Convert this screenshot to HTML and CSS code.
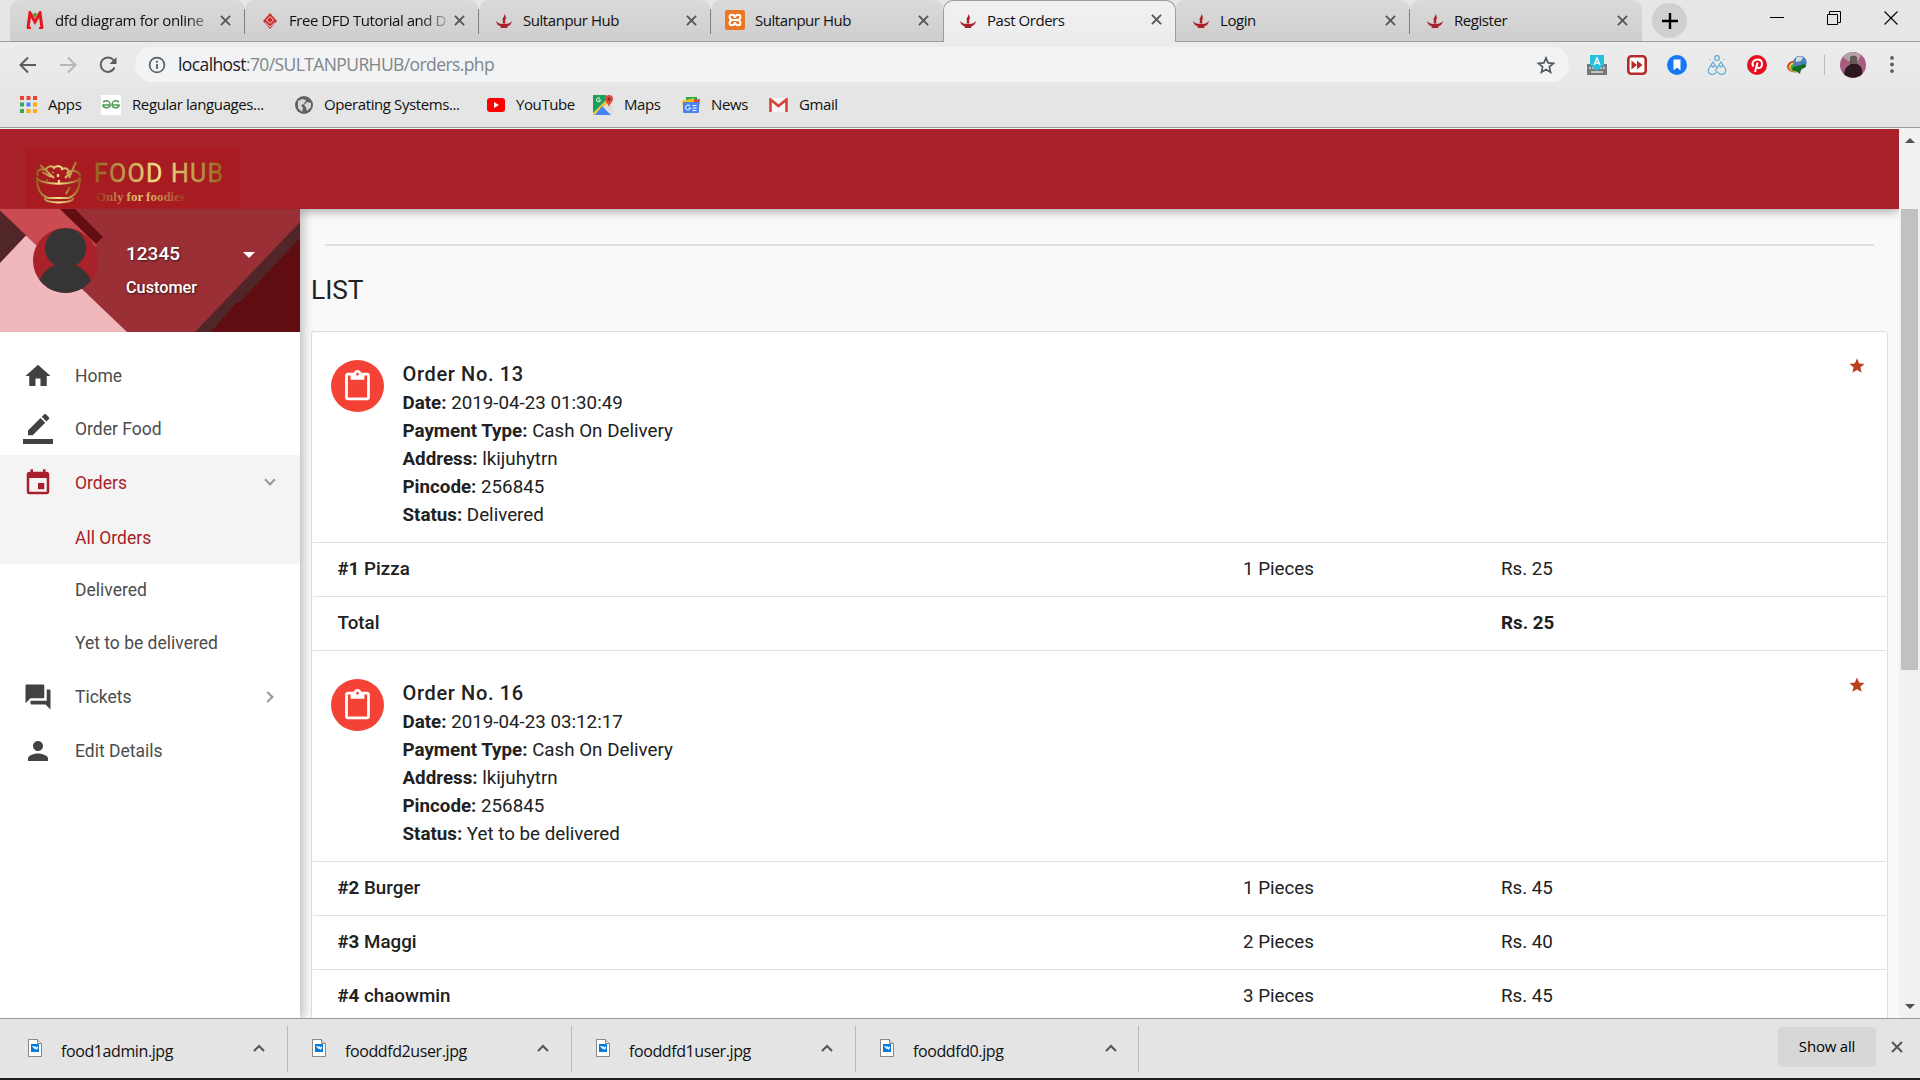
FILE: index.html
```html
<!DOCTYPE html>
<html lang="en">
<head>
<meta charset="utf-8">
<title>Past Orders</title>
<link rel="stylesheet" href="styles.css">
</head>
<body>
<svg class="defs" width="0" height="0" aria-hidden="true">
  <symbol id="lamp" viewBox="0 0 16 16"><path fill="#a92129" d="M0 8c2 2.500 5 3 8 3s6-.5 8-3c-.5 3-2.500 5-5 5.500l.5 1.500h-7l.5-1.500C2.500 13 .5 11 0 8zM8.500 1c1.500 2.500 2 4.500.5 6.500l.5 3h-3l.5-3C5.500 6 8.500 4 8.500 1z"/></symbol>
  <symbol id="close" viewBox="0 0 12 12"><path d="M1 1l10 10M11 1L1 11" stroke="#555" stroke-width="2" fill="none"/></symbol>
  <symbol id="clip" viewBox="0 0 24 24"><path fill="#fff" d="M19 2h-4.180C14.400.840 13.300 0 12 0S9.600.840 9.180 2H5c-1.100 0-2 .9-2 2v16c0 1.100.9 2 2 2h14c1.100 0 2-.9 2-2V4c0-1.100-.9-2-2-2zm-7 0c.55 0 1 .45 1 1s-.45 1-1 1-1-.45-1-1 .45-1 1-1zm7 18H5V4h2v3h10V4h2v16z"/></symbol>
  <symbol id="star" viewBox="0 0 24 24"><path d="M12 17.270L18.180 21l-1.640-7.030L22 9.240l-7.190-.61L12 2 9.190 8.630 2 9.240l5.460 4.730L5.820 21z"/></symbol>
  <symbol id="file" viewBox="0 0 14 18"><path d="M.5.5h9l4 4v13H.5z" fill="#fff" stroke="#888"/><path d="M9.500.5v4h4" fill="#ddd" stroke="#888"/><path d="M3 5h8v8H3z" fill="#0a78d7"/><path d="M4 7h1.500l1 1 1-1 1 1.500L10 7v2l-1.500 2-1-1.500-1 .5z" fill="#fff"/></symbol>
  <symbol id="up" viewBox="0 0 12 8"><path d="M1 7l5-5 5 5" fill="none" stroke="#555" stroke-width="2"/></symbol>
</svg>

<header class="browser">
  <div class="tabs">
    <div class="tab"><svg class="fav wide" viewBox="0 0 18 18"><path d="M2 17L4 2l5 9 5-9 2 15" fill="none" stroke="#e8141c" stroke-width="3"/><path d="M1 17h4M13 17h4" stroke="#e8141c" stroke-width="2"/><path d="M6 2l2 1 1-2 1 2 2-1-3 5z" fill="#4a9a3a"/></svg><span class="name fade n1">dfd diagram for online</span><svg class="x"><use href="#close"/></svg></div>
    <div class="tab"><svg class="fav" viewBox="0 0 16 16"><path d="M8 0l7 8-7 8-7-8z" fill="#c9302f"/><path d="M4.500 7L8 3.500 11.500 7 8 10.500zM3 9.500l5 4.500 5-4.500" fill="none" stroke="#f3d6d6" stroke-width="1"/></svg><span class="name fade n2">Free DFD Tutorial and D</span><svg class="x"><use href="#close"/></svg></div>
    <div class="tab"><svg class="fav"><use href="#lamp"/></svg><span class="name">Sultanpur Hub</span><svg class="x"><use href="#close"/></svg></div>
    <div class="tab"><svg class="fav big" viewBox="0 0 20 20"><rect width="20" height="20" rx="2" fill="#ed7622"/><path d="M10 8C10 4 4.500 3.500 4.500 7c0 2 2 3 3.500 3-1.500 0-3.500 1-3.500 3 0 3.500 5.500 3 5.500-1 0 4 5.500 4.500 5.500 1 0-2-2-3-3.500-3 1.500 0 3.500-1 3.500-3C15.500 3.500 10 4 10 8zM8 10h4" fill="none" stroke="#fff" stroke-width="2"/></svg><span class="name">Sultanpur Hub</span><svg class="x"><use href="#close"/></svg></div>
    <div class="tab active"><svg class="fav"><use href="#lamp"/></svg><span class="name">Past Orders</span><svg class="x"><use href="#close"/></svg></div>
    <div class="tab"><svg class="fav"><use href="#lamp"/></svg><span class="name">Login</span><svg class="x"><use href="#close"/></svg></div>
    <div class="tab last"><svg class="fav"><use href="#lamp"/></svg><span class="name">Register</span><svg class="x"><use href="#close"/></svg></div>
    <div class="newtab"><svg width="16" height="16" viewBox="0 0 16 16"><path d="M8 0v16M0 8h16" stroke="#000" stroke-width="2.400"/></svg></div>
    <div class="winctl">
      <svg width="14" height="14" viewBox="0 0 14 14"><path d="M0 6.500h14" stroke="#000"/></svg>
      <svg width="14" height="14" viewBox="0 0 14 14"><path d="M.5 3.500h10v10H.5zM2.500 3V.5h11v11H11" fill="none" stroke="#000"/></svg>
      <svg width="14" height="14" viewBox="0 0 14 14"><path d="M.5.5l13 13M13.500.5l-13 13" stroke="#000" stroke-width="1.100"/></svg>
    </div>
  </div>
  <div class="toolbar">
    <svg class="nav" viewBox="0 0 18 18"><path d="M17 9H2M9 1.500L1.500 9 9 16.500" fill="none" stroke="#5a5d61" stroke-width="2"/></svg>
    <svg class="nav" viewBox="0 0 18 18"><path d="M1 9h15M9 1.500L16.500 9 9 16.500" fill="none" stroke="#b5b6b8" stroke-width="2"/></svg>
    <svg class="nav" viewBox="0 0 18 18"><path d="M15.500 11.500A7.200 7.200 0 1 1 14.500 4.200" fill="none" stroke="#5a5d61" stroke-width="2"/><path d="M17.500 1v7h-7z" fill="#5a5d61"/></svg>
    <div class="omnibox">
      <svg width="18" height="18" viewBox="0 0 18 18"><circle cx="9" cy="9" r="7.400" fill="none" stroke="#5a5d61" stroke-width="1.700"/><path d="M9 8v5M9 4.700v2" stroke="#5a5d61" stroke-width="1.800"/></svg>
      <span class="url"><b>localhost</b>:70/SULTANPURHUB/orders.php</span>
      <svg class="bm" width="20" height="20" viewBox="0 0 24 24"><path d="M12 3.500l2.500 6 6.500.5-5 4.300 1.500 6.400L12 17.300l-5.500 3.400L8 14.300 3 10l6.500-.5z" fill="none" stroke="#55585c" stroke-width="2"/></svg>
    </div>
    <div class="exts">
      <svg viewBox="0 0 20 20"><path d="M0 9h20v11H0z" fill="#777"/><path d="M2 13h2m1 0h2m6 0h2m1 0h2M4 17h12" stroke="#ddd" stroke-width="1.500"/><path d="M3 0h14v10l-7 6-7-6z" fill="#24c0dc"/><path d="M7 10l3-7 3 7M8 8h4" stroke="#fff" stroke-width="1.300" fill="none"/></svg>
      <svg viewBox="0 0 20 20"><rect x="1.300" y="1.300" width="17.400" height="17.400" rx="3" fill="#fff" stroke="#b52a2a" stroke-width="2.600"/><path d="M4.500 5.500l5.500 4.500-5.500 4.500zM10 5.500l5.500 4.500-5.500 4.500z" fill="#b52a2a"/></svg>
      <svg viewBox="0 0 20 20"><circle cx="10" cy="10" r="10" fill="#1877f2"/><path d="M6.500 4.500h7v11L10 12.500l-3.500 3z" fill="#fff"/></svg>
      <svg viewBox="0 0 20 20" fill="none" stroke="#5ba6d8" stroke-width="1.100"><circle cx="10" cy="3" r="2.400"/><path d="M1.500 14L6 7l4 6 4-6 4.500 7c1 3-1 5.500-4 5.500-2 0-3-1-4.500-3-1.500 2-2.500 3-4.500 3-3 0-5-2.500-4-5.500zM4 10.500l2 1.500 2-1.500m4 0l2 1.500 2-1.500M3 4v1m14-1v1M10 13l-2 3"/></svg>
      <svg viewBox="0 0 20 20"><circle cx="10" cy="10" r="10" fill="#e60f22"/><path d="M6.500 11.500C4 8 6.500 4.500 10.500 4.500c6 0 5.500 8.500 1.500 8.500-1.500 0-2-1-2-1M10.500 7.500L8 17" fill="none" stroke="#fff" stroke-width="2"/></svg>
      <svg viewBox="0 0 20 20"><ellipse cx="8" cy="11.500" rx="8" ry="6" fill="#d34a2e"/><ellipse cx="8.500" cy="12" rx="6.500" ry="4.800" fill="#e8d83a"/><ellipse cx="9" cy="12.500" rx="5.500" ry="4" fill="#3aa648"/><circle cx="13" cy="7.500" r="6.700" fill="#4b82b8"/><path d="M9 3c3-2 5-2 7-.5L14 6 9 7z" fill="#d2dfdf"/><path d="M6 12l12-3 1 3-5 2-1 5-4-3-4-1z" fill="#176b20"/></svg>
      <i class="vr"></i>
      <svg class="me" viewBox="0 0 26 26"><circle cx="13" cy="13" r="13" fill="#a85c80"/><path d="M3 5a13 13 0 0 1 18-2L18 9H8z" fill="#b5a2a8"/><path d="M4 22c1-7 4-8 6-9V6c1-3 6-3 7 0v6c3 1 6 4 5 10-5 5-13 5-18 0z" fill="#2c1820"/><path d="M10 6c1-3 6-3 7 0v6h-7z" fill="#655657"/></svg>
      <svg class="dots" viewBox="0 0 4 18"><g fill="#5a5d61"><circle cx="2" cy="2" r="2"/><circle cx="2" cy="9" r="2"/><circle cx="2" cy="16" r="2"/></g></svg>
    </div>
  </div>
  <nav class="bookmarks">
    <a class="b1"><svg width="17" height="17" viewBox="0 0 17 17"><path d="M0 0h4v4H0zM6.500 0h4v4h-4zM13 0h4v4h-4z" fill="#ea4335"/><path d="M0 6.500h4v4H0zM0 13h4v4H0z" fill="#34a853"/><path d="M6.500 6.500h4v4h-4z" fill="#4285f4"/><path d="M13 6.500h4v4h-4zM6.500 13h4v4h-4zM13 13h4v4h-4z" fill="#fbaf08"/></svg><span>Apps</span></a>
    <a class="b2"><svg width="20" height="20" viewBox="0 0 20 20"><path fill="#fff" d="M0 0h20v20H0z"/><path d="M2 7c5-3 7 0 7 3s-5 4-7 1v-1h7m9-3c-5-3-7 0-7 3s5 4 7 1v-1h-7" fill="none" stroke="#4d9b57" stroke-width="1.500"/></svg><span>Regular languages...</span></a>
    <a class="b3"><svg width="18" height="18" viewBox="0 0 18 18"><circle cx="9" cy="9" r="9" fill="#5f6368"/><path d="M3 5l4-2 4 1-2 4-3 1 2 3-1 4-4-4zM12 6l4 1v4l-4 4-1-4-2-2z" fill="#d9d9d9"/></svg><span>Operating Systems...</span></a>
    <a class="b4"><svg width="18" height="14" viewBox="0 0 18 14"><rect width="18" height="14" rx="3" fill="#f00"/><path d="M7 4l5 3-5 3z" fill="#fff"/></svg><span>YouTube</span></a>
    <a class="b5"><svg width="20" height="20" viewBox="0 0 20 20"><path fill="#1c9f5a" d="M0 0h13l-1 9L0 20z"/><path fill="#f2c63c" d="M0 18L13 5l3 2L3 20H0z"/><path fill="#4285f4" d="M2 20l7-9 9 9z"/><path fill="#ddd" d="M11 11l5-3 4 3v9z"/><path fill="#dc4a3d" d="M16 0a4 4 0 0 1 4 4c0 3-3 4-4 8-1-4-4-5-4-8a4 4 0 0 1 4-4z"/><circle cx="16" cy="4" r="1.500" fill="#7c2622"/><path d="M7 3.500A2 2 0 1 0 7.500 5H5.500" stroke="#fff" fill="none"/></svg><span>Maps</span></a>
    <a class="b6"><svg width="18" height="16" viewBox="0 0 18 16"><path fill="#2ca554" d="M4 0h11v5H4z"/><path fill="#e0453a" d="M10 3l8-1-1 9H9z"/><path fill="#fbbc10" d="M0 4l12-3v6L1 10z"/><rect x="1" y="5" width="16" height="11" rx="1" fill="#4a83ec"/><path d="M8 9a2.500 2.500 0 1 0 .5 2H6.500M10.500 8.500h4m-4 2.500h4m-4 2.500h4" stroke="#fff" fill="none"/></svg><span>News</span></a>
    <a class="b7"><svg width="19" height="14" viewBox="0 0 19 14"><path fill="#f5f5f5" d="M1 0h17v14H1z"/><path d="M1.500 14V1.500l8 6.500 8-6.500V14" fill="none" stroke="#d9443a" stroke-width="2.600"/></svg><span>Gmail</span></a>
  </nav>
</header>

<main class="viewport">
  <div class="page">
    <div class="topbar">
      <svg class="logo" width="213" height="60" viewBox="0 0 213 60">
        <defs>
          <linearGradient id="gold"><stop offset="0" stop-color="#93631f"/><stop offset=".5" stop-color="#f6e38c"/><stop offset="1" stop-color="#94621c"/></linearGradient>
          <linearGradient id="gold2"><stop offset="0" stop-color="#96371d"/><stop offset=".5" stop-color="#e8ce78"/><stop offset="1" stop-color="#a03a1d"/></linearGradient>
        </defs>
        <rect width="213" height="60" fill="#a71b21"/>
        <g fill="none" stroke="url(#gold)" stroke-width="2">
          <path d="M11 30c0 12 5 18 11 20h21c7-3 11-10 11-20M11 29c0 9 43 9 43 0"/>
          <path d="M19 50c-2 6 29 6 28 0M12 28c-3-6 4-8 8-6 1-5 7-4 8-2 2-3 8-2 8 1 5-2 7 1 6 3 6-3 12 0 12 4M14 17l14 13M16 24l9 5M50 14l-7 16M46 23l-7 7"/>
          <path d="M40 46l4-7M32 26v3M21 31v2M33 32v3M27 24v1" stroke-width="2.300"/>
        </g>
        <text class="logo-name" x="68" y="33.500" textLength="130" fill="url(#gold)">FOOD HUB</text>
        <text class="logo-tag" x="70" y="52.500" textLength="89" fill="url(#gold2)">Only for foodies</text>
      </svg>
    </div>
    <div class="body">
      <aside class="sidebar">
        <div class="profile">
          <svg class="art" width="300" height="123" viewBox="0 0 300 123" preserveAspectRatio="none">
            <path fill="#9a3036" d="M0 0h300v123H0z"/>
            <path fill="#ca4b52" d="M0 0h60l37 36-37 24-24-24L0 1z"/>
            <path fill="#640d12" d="M60 0h15l28 28-7 7z"/>
            <path fill="#512629" d="M0 2l26 24.500L0 54z"/>
            <path fill="#f0b8bc" d="M26 26.500L127 123H0V54z"/>
            <path fill="#512629" d="M300 13v20l-88 90h-17z"/>
            <path fill="#600d11" d="M300 29v94h-89l25-29 4-1z"/>
          </svg>
          <svg class="avatar" width="65" height="65" viewBox="0 0 65 65"><clipPath id="round"><circle cx="32.500" cy="32.500" r="32.500"/></clipPath><g clip-path="url(#round)"><path fill="#a92129" d="M0 0h65v65H0z"/><ellipse cx="32.500" cy="20" rx="20.500" ry="20" fill="#353535"/><path d="M20 38h24c8 4 12 10 15 16v11H5V55c3-7 8-14 15-17z" fill="#353535"/></g></svg>
          <div class="who"><strong>12345</strong><span>Customer</span></div>
          <i class="caret"></i>
        </div>
        <ul class="menu">
          <li><svg viewBox="0 0 24 24"><path d="M10 20v-6h4v6h5v-8h3L12 3 2 12h3v8z"/></svg>Home</li>
          <li><svg class="edit" viewBox="0 0 24 24"><path d="M17.750 7L14 3.250l-10 10V17h3.750l10-10zm2.960-2.960a1 1 0 0 0 0-1.410L18.370.290a1 1 0 0 0-1.410 0L15 2.250 18.750 6zM0 20h24v4H0z"/></svg>Order Food</li>
          <li class="on"><svg viewBox="0 0 24 24"><path d="M17 12h-5v5h5v-5zM16 1v2H8V1H6v2H5c-1.110 0-1.990.9-1.990 2L3 19a2 2 0 0 0 2 2h14c1.100 0 2-.9 2-2V5c0-1.100-.9-2-2-2h-1V1h-2zm3 18H5V8h14v11z"/></svg>Orders<i class="chev down"></i></li>
          <li class="on sub">All Orders</li>
          <li class="sub s2">Delivered</li>
          <li class="sub">Yet to be delivered</li>
          <li class="tick"><svg viewBox="0 0 24 24"><path d="M21 6h-2v9H6v2c0 .55.45 1 1 1h11l4 4V7c0-.55-.45-1-1-1zm-4 6V3c0-.55-.45-1-1-1H3c-.55 0-1 .45-1 1v14l4-4h10c.55 0 1-.45 1-1z"/></svg>Tickets<i class="chev"></i></li>
          <li><svg viewBox="0 0 24 24"><path d="M12 12c2.210 0 4-1.790 4-4s-1.790-4-4-4-4 1.790-4 4 1.790 4 4 4zm0 2c-2.670 0-8 1.340-8 4v2h16v-2c0-2.660-5.330-4-8-4z"/></svg>Edit Details</li>
        </ul>
      </aside>
      <section class="content">
        <hr>
        <h1>LIST</h1>
        <div class="card">
          <article class="order">
            <div class="badge"><svg width="33" height="33"><use href="#clip"/></svg></div>
            <div class="info">
              <h2>Order No. 13</h2>
              <p><b>Date:</b> 2019-04-23 01:30:49</p>
              <p><b>Payment Type:</b> Cash On Delivery</p>
              <p><b>Address:</b> lkijuhytrn</p>
              <p><b>Pincode:</b> 256845</p>
              <p><b>Status:</b> Delivered</p>
            </div>
            <svg class="fave" width="18" height="18"><use href="#star"/></svg>
          </article>
          <div class="row"><span class="item"><b>#1</b> Pizza</span><span>1 Pieces</span><span>Rs. 25</span></div>
          <div class="row"><span class="item">Total</span><span></span><b>Rs. 25</b></div>
          <article class="order">
            <div class="badge"><svg width="33" height="33"><use href="#clip"/></svg></div>
            <div class="info">
              <h2>Order No. 16</h2>
              <p><b>Date:</b> 2019-04-23 03:12:17</p>
              <p><b>Payment Type:</b> Cash On Delivery</p>
              <p><b>Address:</b> lkijuhytrn</p>
              <p><b>Pincode:</b> 256845</p>
              <p><b>Status:</b> Yet to be delivered</p>
            </div>
            <svg class="fave" width="18" height="18"><use href="#star"/></svg>
          </article>
          <div class="row"><span class="item"><b>#2</b> Burger</span><span>1 Pieces</span><span>Rs. 45</span></div>
          <div class="row"><span class="item"><b>#3</b> Maggi</span><span>2 Pieces</span><span>Rs. 40</span></div>
          <div class="row"><span class="item"><b>#4</b> chaowmin</span><span>3 Pieces</span><span>Rs. 45</span></div>
        </div>
      </section>
    </div>
  </div>
  <div class="scroll"><i class="arrow-up"></i><i class="thumb"></i><i class="arrow-down"></i></div>
</main>

<footer class="shelf">
  <div class="dl"><svg class="file"><use href="#file"/></svg><span>food1admin.jpg</span><svg class="up"><use href="#up"/></svg></div>
  <div class="dl"><svg class="file"><use href="#file"/></svg><span>fooddfd2user.jpg</span><svg class="up"><use href="#up"/></svg></div>
  <div class="dl"><svg class="file"><use href="#file"/></svg><span>fooddfd1user.jpg</span><svg class="up"><use href="#up"/></svg></div>
  <div class="dl"><svg class="file"><use href="#file"/></svg><span>fooddfd0.jpg</span><svg class="up"><use href="#up"/></svg></div>
  <button class="all">Show all</button>
  <svg class="shut"><use href="#close"/></svg>
</footer>
<div class="taskbar"></div>
</body>
</html>
```
FILE: styles.css
```css
* { box-sizing: border-box; }
body { margin: 0; width: 1920px; height: 1080px; overflow: hidden; display: flex; flex-direction: column; font-family: Roboto, "Liberation Sans", sans-serif; color: #212121; }
svg { flex: none; display: block; }
.defs { position: absolute; }

/* browser chrome */
.browser { height: 129px; flex: none; background: #e5e5e5; border-bottom: 1px solid #f4f4f4; box-shadow: inset 0 -1px #9d9d9d; font-family: "Open Sans", "Noto Sans", sans-serif; color: #111; }
.tabs { height: 42px; display: flex; padding-left: 10px; border-bottom: 1px solid #9b9b9b; background: #e6e6e6; }
.tab { width: 232px; height: 41px; display: flex; align-items: center; padding: 0 14px 1px 17px; background: linear-gradient(#dadada, #cecece); border-radius: 10px 10px 0 0; font-size: 15px; letter-spacing: -.45px; }
.tab:first-child { width: 235px; padding-left: 16px; }
.tab:nth-child(2), .tab:nth-child(6) { width: 234px; }
.tab:nth-child(4) { padding-left: 14px; }
.tab .name { flex: 1; margin-left: 11px; white-space: nowrap; overflow: hidden; }
.tab:nth-child(4) .name { margin-left: 10px; }
.fade { -webkit-mask-image: linear-gradient(90deg, #000 80%, transparent); mask-image: linear-gradient(90deg, #000 80%, transparent); }
.tab:not(.active):not(.last):not(:nth-child(4)) { background: linear-gradient(#808080, #808080) right 9px / 1px 25px no-repeat, linear-gradient(#dadada, #cecece); }
.tab.active { width: 233px; margin-right: -1px; height: 42px; margin-bottom: -1px; padding: 0 13px 4px 16px; background: linear-gradient(#f1f1f1, #ececec); border: 1px solid #9d9d9d; border-bottom: 0; position: relative; }
.tab.active + .tab { width: 235px; padding-left: 18px; }
.fav { width: 16px; height: 16px; margin-top: 2px; }
.fav.wide { width: 18px; height: 18px; margin-top: 0; }
.fav.big { width: 20px; height: 20px; margin-top: 0; }
.n1 { letter-spacing: -.36px; }
.x { width: 11px; height: 11px; }
.newtab { width: 35px; height: 35px; margin: 3px 0 0 10px; border-radius: 50%; background: #d0d0d0; display: grid; place-items: center; }
.winctl { margin-left: auto; display: flex; gap: 43px; padding: 11px 22px 0 0; }
.toolbar { height: 45px; display: flex; align-items: center; padding-left: 19px; background: linear-gradient(#ececec, #e8e8e8); }
.nav { width: 18px; height: 18px; margin-right: 22px; }
.omnibox { width: 1434px; height: 35px; margin-left: -4px; border-radius: 18px; background: #f1f3f4; display: flex; align-items: center; padding: 0 13px; }
.url { margin: -1px 0 0 12px; flex: 1; font-size: 17.500px; letter-spacing: -.6px; color: #80868b; white-space: nowrap; }
.url b { font-weight: 400; color: #202124; }
.exts { display: flex; align-items: center; margin-left: 17.500px; gap: 20px; }
.exts svg { width: 20px; height: 20px; }
.exts .vr { width: 1px; height: 20px; background: #bbb; margin: 0 -5px 0 -3px; }
.exts .me { width: 26px; height: 26px; }
.exts .dots { width: 4px; height: 17px; margin-left: 4px; }
.bookmarks { height: 35px; display: grid; grid-template-columns: 81px 194px 192px 106px 89px 87px 120px; padding-left: 20px; font-size: 15px; letter-spacing: -.4px; }
.bookmarks a { display: flex; align-items: center; gap: 11px; white-space: nowrap; }
.bookmarks span { margin-top: -1px; }

/* page */
.viewport { height: 889px; flex: none; display: flex; overflow: hidden; }
.page { width: 1899px; display: flex; flex-direction: column; background: #f9f9f9; }
.topbar { height: 80px; flex: none; background: #a82128; padding: 19px 0 0 25px; box-shadow: 0 2px 10px rgba(0,0,0,.35); position: relative; z-index: 1; clip-path: inset(0 0 -20px 0); }
.logo { height: 60px; margin-left: 1px; }
.logo-name { font: 400 25px "Roboto", sans-serif; letter-spacing: 1px; stroke: url(#gold); stroke-width: .4px; }
.logo-tag { font: bold 13px "Liberation Serif", serif; }
.body { flex: 1; display: flex; min-height: 0; }
.sidebar { width: 300px; flex: none; background: #fff; box-shadow: 3px 0 10px rgba(0,0,0,.25); position: relative; z-index: 2; clip-path: inset(0 -20px 0 0); }
.profile { height: 123px; display: flex; position: relative; padding: 19px 0 0 33px; }
.art { position: absolute; inset: 0; }
.avatar { position: relative; }
.who { position: relative; margin-left: 28px; width: 117px; color: #fff; display: flex; flex-direction: column; text-shadow: 1px 1px 2px rgba(0,0,0,.6); font-weight: 500; }
.who strong { font-weight: 500; font-size: 19px; line-height: 22px; margin-top: 15px; }
.who span { font-size: 16.250px; line-height: 20px; margin-top: 13px; }
.caret { position: relative; width: 0; height: 0; border: 6.500px solid transparent; border-top: 6px solid #fff; margin-top: 24px; }
.menu { list-style: none; margin: 0; padding: 17px 0 0; font-size: 17.500px; color: #4c4c4c; }
.menu li { height: 53px; display: flex; align-items: center; padding: 1px 0 0 23px; }
.menu svg { width: 30px; height: 30px; margin-right: 22px; fill: #424242; }
.menu .tick { height: 55px; }
.menu li.on { background: #f4f4f4; color: #a82128; height: 54px; }
.menu li.on svg { fill: #a82128; }
.menu li.sub { padding-left: 75px; }
.menu li.on.sub { height: 55px; padding-top: 2px; }
.menu li.s2 { height: 52px; padding: 0 0 1px 75px; }
.chev { margin: 0 28px 0 auto; width: 8px; height: 8px; border: solid #9a9a9a; border-width: 2px 2px 0 0; transform: rotate(45deg); }
.chev.down { transform: translateY(-3px) rotate(135deg); margin-right: 26px; }
.content { flex: 1; padding: 35px 11px 0; min-width: 0; }
hr { height: 2px; border: 0; background: #dedede; margin: 0 14px; }
h1 { margin: 24px 0 0; font-size: 26.250px; line-height: 40px; font-weight: 400; }
.card { margin-top: 21px; height: 900px; background: #fff; border: 1px solid #ddd; border-radius: 3px; padding: 0 1px; font-size: 18.750px; }
.order { height: 211px; display: flex; padding: 28px 20px 0 18px; border-bottom: 1px solid #e0e0e0; }
.badge { width: 53px; height: 52px; border-radius: 50%; background: #f44336; display: grid; place-items: center; }
.info { flex: 1; margin-left: 18.500px; }
h2 { margin: 0 0 1px; font-size: 20px; line-height: 28px; font-weight: 500; letter-spacing: .65px; }
.info p { margin: 0; line-height: 28px; }
.info b { font-weight: 700; }
.fave { fill: #b8401f; margin: -3px 0 0; }
.row { height: 54px; display: grid; grid-template-columns: 905.500px 258px 1fr; align-items: center; padding: 0 0 2px 24.500px; border-bottom: 1px solid #e0e0e0; }
.item { font-weight: 500; }
.scroll { width: 21px; background: #f1f1f1; display: flex; flex-direction: column; align-items: center; }
.arrow-up { border: 5px solid transparent; border-top: 0; border-bottom-color: #505050; margin-top: 9px; }
.thumb { width: 17px; height: 461px; background: #c1c1c1; margin-top: 66px; }
.arrow-down { border: 5px solid transparent; border-bottom: 0; border-top-color: #505050; margin: auto 0 9px; }

/* download shelf */
.shelf { height: 60px; flex: none; display: flex; align-items: center; background: #e4e4e4; border-top: 1px solid #999; font-family: "Open Sans", "Noto Sans", sans-serif; color: #111; }
.dl { width: 284px; height: 46px; display: flex; align-items: center; border-right: 1px solid #bbb; padding: 0 22px 2px 28px; }
.dl:first-child { width: 288px; }
.dl + .dl { padding-left: 24px; }
.dl:nth-child(4) { width: 283px; padding-right: 21px; }
.dl span { flex: 1; margin: 6px 0 0 19px; font-size: 16px; letter-spacing: -.4px; }
.file { width: 14px; height: 18px; }
.up { width: 12px; height: 8px; }
.all { margin-left: auto; width: 98px; height: 40px; margin-bottom: 4px; padding-bottom: 3px; border: 0; border-radius: 4px; background: #d7d7d7; color: #000; font: 500 15px "Open Sans", sans-serif; letter-spacing: -.2px; }
.shut { width: 12px; height: 12px; margin: 0 17px 4px 15px; }
.taskbar { height: 2px; background: #1c1c1c; }
```
